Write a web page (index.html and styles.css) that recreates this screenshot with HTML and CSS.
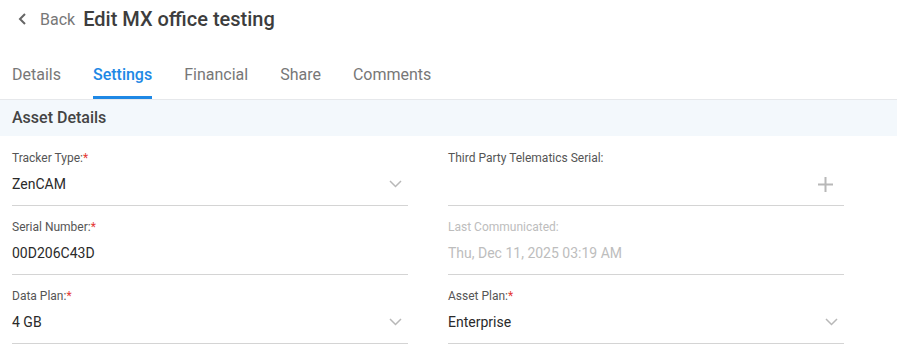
FILE: index.html
```html
<!DOCTYPE html>
<html lang="en">
<head>
  <meta charset="UTF-8">
  <title>Edit MX office testing</title>
  <link rel="stylesheet" href="styles.css">
</head>
<body>
  <div class="header">
    <a class="back" href="#">
      <svg width="10" height="12" viewBox="0 0 10 12"><path d="M7 1 L2 6 L7 11" fill="none" stroke="#666" stroke-width="2"/></svg>
      <span>Back</span>
    </a>
    <h1 class="title">Edit MX office testing</h1>
  </div>

  <div class="tabs">
    <div class="tab">Details</div>
    <div class="tab active">Settings</div>
    <div class="tab">Financial</div>
    <div class="tab">Share</div>
    <div class="tab">Comments</div>
  </div>

  <div class="section-title">Asset Details</div>

  <div class="form">
    <div class="field">
      <label>Tracker Type:<span class="req">*</span></label>
      <div class="value">
        <span>ZenCAM</span>
        <svg class="chevron" width="13" height="8" viewBox="0 0 13 8"><path d="M1 1 L6.5 6.5 L12 1" fill="none" stroke="#b8b8b8" stroke-width="1.5"/></svg>
      </div>
    </div>
    <div class="field">
      <label>Third Party Telematics Serial:</label>
      <div class="value">
        <span></span>
        <svg class="plus" width="15" height="15" viewBox="0 0 15 15"><path d="M7.5 0 V15 M0 7.5 H15" fill="none" stroke="#b8b8b8" stroke-width="2"/></svg>
      </div>
    </div>
    <div class="field">
      <label>Serial Number:<span class="req">*</span></label>
      <div class="value"><span>00D206C43D</span></div>
    </div>
    <div class="field disabled">
      <label>Last Communicated:</label>
      <div class="value"><span>Thu, Dec 11, 2025 03:19 AM</span></div>
    </div>
    <div class="field">
      <label>Data Plan:<span class="req">*</span></label>
      <div class="value">
        <span>4 GB</span>
        <svg class="chevron" width="13" height="8" viewBox="0 0 13 8"><path d="M1 1 L6.5 6.5 L12 1" fill="none" stroke="#b8b8b8" stroke-width="1.5"/></svg>
      </div>
    </div>
    <div class="field">
      <label>Asset Plan:<span class="req">*</span></label>
      <div class="value">
        <span>Enterprise</span>
        <svg class="chevron" width="13" height="8" viewBox="0 0 13 8"><path d="M1 1 L6.5 6.5 L12 1" fill="none" stroke="#b8b8b8" stroke-width="1.5"/></svg>
      </div>
    </div>
  </div>
</body>
</html>
```

FILE: styles.css
```css
body {
  margin: 0;
  font-family: Roboto, "Liberation Sans", sans-serif;
  background-color: #fff;
  color: #333;
}

.header {
  display: flex;
  align-items: center;
  height: 28px;
  padding: 5px 0 0 18px;
}

.back {
  display: flex;
  align-items: center;
  gap: 12px;
  color: #777;
  text-decoration: none;
  font-size: 16px;
  margin-right: 8px;
}

.title {
  margin: 0;
  font-size: 20px;
  font-weight: 500;
  color: #3d3d3d;
}

.tabs {
  display: flex;
  gap: 32px;
  padding: 32px 12px 0;
  border-bottom: 1px solid #e6e8eb;
}

.tab {
  font-size: 16px;
  line-height: 20px;
  color: #777;
  padding-bottom: 11px;
  border-bottom: 3px solid transparent;
}

.tab.active {
  color: #1e88e5;
  font-weight: 500;
  border-bottom-color: #1e88e5;
}

.section-title {
  background-color: #f3f8fc;
  height: 36px;
  line-height: 36px;
  padding-left: 12px;
  font-size: 16px;
  font-weight: 500;
  color: #444;
}

.form {
  display: grid;
  grid-template-columns: 396px 396px;
  column-gap: 40px;
  row-gap: 13px;
  padding: 14px 12px 0;
}

.field {
  border-bottom: 1px solid #d4d4d4;
  padding-bottom: 11px;
}

.field label {
  display: block;
  font-size: 12px;
  line-height: 16px;
  color: #555;
}

.req {
  color: #e53935;
}

.value {
  display: flex;
  justify-content: space-between;
  align-items: center;
  margin-top: 8px;
  height: 20px;
  font-size: 14px;
  color: #2a2a2a;
}

.chevron {
  margin-right: 6px;
}

.plus {
  margin-right: 11px;
}

.disabled label,
.disabled .value {
  color: #bdbdbd;
}
```
